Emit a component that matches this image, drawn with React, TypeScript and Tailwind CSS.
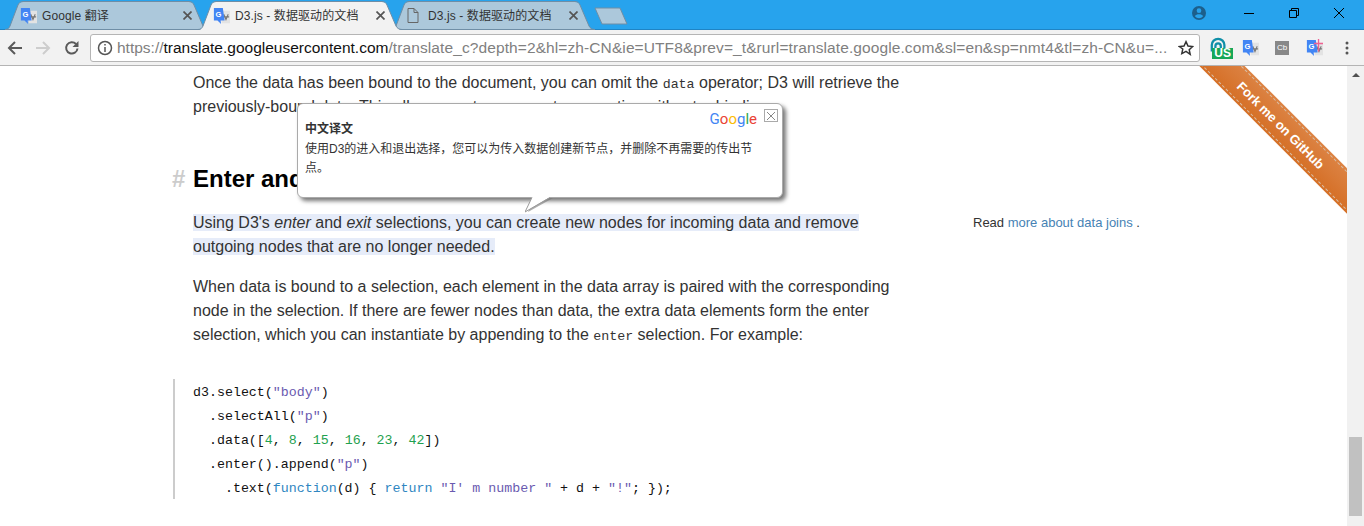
const sans = "font-['Liberation_Sans',Arial,'Noto_Sans_CJK_SC',sans-serif]";
const mono = "font-['Liberation_Mono',monospace] text-[13.300px] leading-none";

function TranslateIcon({ star = false }: { star?: boolean }) {
  return (
    <svg width="17" height="18" viewBox="0 0 19 20">
      <path d="M8 4h11v14H10z" fill="#e3e3e3" />
      <path d="M12 8l2.500 6L17 8M11 11h7" fill="none" stroke="#777" strokeWidth="1.200" />
      <path d="M1 1h10l2 14H8.500l.5 4-4-4H1z" fill="#4285f4" />
      <text x="2.800" y="11" fontSize="8.500" fontWeight="700" fill="#fff" fontFamily="Liberation Sans">G</text>
      {star && <path d="M14 0v14M9 5h10" stroke="#f06292" strokeWidth="1.500" />}
    </svg>
  );
}

function Tab({ title, active, icon, className = "" }: { title: string; active?: boolean; icon: React.ReactNode; className?: string }) {
  return (
    <div className={`relative flex h-[29px] w-[204px] shrink-0 items-center pl-[15px] pr-[17px] ${active ? "z-10" : ""} ${className}`}>
      <svg className="absolute inset-0" width="204" height="29" viewBox="0 0 204 29">
        <path d="M0 29C3 29 4 27 5 25L13 4C14 2 15 1 18 1H184C187 1 188 2 189 4L198 25C199 27 201 29 204 29Z" fill={active ? "#f2f2f2" : "#acc8db"} />
        <path d="M0 28.500C3 28.500 4 27 5 25L13 4C14 2 15 .5 18 .5H184C187 .5 188 2 189 4L198 25C199 27 201 28.500 204 28.500" fill="none" stroke="#6f8ea6" />
        {!active && <path d="M0 28.500H204" stroke="#6f8ea6" />}
      </svg>
      <div className="relative flex w-full items-center">
        <span className="flex w-[22px] shrink-0">{icon}</span>
        <span className={`flex-1 whitespace-nowrap text-[12px] tracking-[0.1px] text-[#333] ${sans}`}>{title}</span>
        <svg width="9" height="9" viewBox="0 0 9 9" stroke="#555" strokeWidth="1.700"><path d="M.5.5l8 8M8.500.5l-8 8" /></svg>
      </div>
    </div>
  );
}

function Chrome() {
  return (
    <div className={sans}>
      <div className="flex h-[30px] items-end justify-between border-b border-[#1f84c5] bg-[#27a3ed] pl-[5px]">
        <div className="-mb-[1px] flex items-end">
          <Tab title="Google 翻译" icon={<TranslateIcon />} />
          <Tab className="-ml-[11px]" title="D3.js - 数据驱动的文档" active icon={<TranslateIcon />} />
          <Tab className="-ml-[11px]" title="D3.js - 数据驱动的文档" icon={
            <svg width="14" height="17" viewBox="0 0 14 17" fill="none" stroke="#666"><path d="M2 1.500h6l4 4v10H2zM8 1.500v4h4" /></svg>
          } />
          <svg className="-ml-[1px] mb-[5px]" width="34" height="18" viewBox="0 0 34 18"><path d="M1 1h25l7 16H8z" fill="#acc8db" stroke="#6f8ea6" /></svg>
        </div>
        <div className="mr-[2px] flex h-full items-start">
          <svg className="mr-[20px] mt-[6px]" width="14" height="14" viewBox="0 0 24 24" fill="#1c5f8c"><path d="M12 0a12 12 0 100 24 12 12 0 000-24zm0 4a4 4 0 110 8 4 4 0 010-8zm0 17a9 9 0 01-7-3.500c1-2.500 4-3.500 7-3.500s6 1 7 3.500A9 9 0 0112 21z" /></svg>
          <div className="flex w-[45px] justify-center pt-[13px]"><div className="h-[1px] w-[10px] bg-black" /></div>
          <div className="flex w-[45px] justify-center pt-[8px]">
            <svg width="10" height="10" viewBox="0 0 10 10" fill="none" stroke="#000"><path d="M.5 2.500h7v7h-7zM2.500 2.500v-2h7v7h-2" /></svg>
          </div>
          <div className="flex w-[46px] justify-center pt-[8px]">
            <svg width="10" height="10" viewBox="0 0 10 10" stroke="#000"><path d="M0 0l10 10M10 0L0 10" /></svg>
          </div>
        </div>
      </div>
      <div className="flex h-[36px] items-center border-b border-[#b4b4b4] bg-[#f2f2f2]">
        <div className="flex w-[90px] items-center pl-[7px]">
          <svg width="16" height="16" viewBox="0 0 16 16" fill="none" stroke="#5a5a5a" strokeWidth="2"><path d="M15 8H2M8 2L2 8l6 6" /></svg>
          <svg className="ml-[12px]" width="16" height="16" viewBox="0 0 16 16" fill="none" stroke="#cdcdcd" strokeWidth="2"><path d="M1 8h13M8 2l6 6-6 6" /></svg>
          <svg className="ml-[13px]" width="16" height="16" viewBox="0 0 16 16" fill="none" stroke="#5a5a5a" strokeWidth="2"><path d="M13.500 8.500A5.700 5.700 0 1112 4" /><path d="M14.500 1v6h-6z" fill="#5a5a5a" stroke="none" /></svg>
        </div>
        <div className="flex h-[28px] w-[1110px] items-center rounded-[3px] border border-[#b5b5b5] bg-white pl-[6px] pr-[5px]">
          <svg className="shrink-0" width="16" height="16" viewBox="0 0 16 16" fill="none" stroke="#555" strokeWidth="1.500"><circle cx="8" cy="8" r="6.500" /><path d="M8 7v5M8 4v1.500" /></svg>
          <div className="ml-[4px] flex-1 overflow-hidden whitespace-nowrap text-[15.500px] text-[#808080]">https://<span className="text-[#111]">translate.googleusercontent.com</span><span className="tracking-[0.1px]">/translate_c?depth=2&amp;hl=zh-CN&amp;ie=UTF8&amp;prev=_t&amp;rurl=translate.google.com&amp;sl=en&amp;sp=nmt4&amp;tl=zh-CN&amp;u=...</span></div>
          <svg className="shrink-0" width="16" height="16" viewBox="0 0 24 24" fill="none" stroke="#333" strokeWidth="2.200"><path d="M12 2.500l3 6.500 7 .8-5.200 4.700 1.500 7L12 17l-6.300 3.500 1.500-7L2 9.800 9 9z" /></svg>
        </div>
        <div className="flex flex-1 items-center pl-[10px]">
          <div className="relative h-[22px] w-[23px]">
            <svg width="18" height="18" viewBox="0 0 20 20" fill="none" stroke="#0f8fa8" strokeWidth="2.500"><path d="M2 16V9a7 7 0 0114 0v6" /><path d="M6 16v-6a3 3 0 016 0v3" /></svg>
            <span className="absolute bottom-0 right-0 bg-[#16a757] px-[2px] text-[12px] font-bold leading-[11px] text-white">US</span>
          </div>
          <span className="ml-[9px] flex w-[17px]"><TranslateIcon /></span>
          <span className="ml-[16px] flex h-[14px] w-[14px] items-center justify-center bg-[#888] text-[8px] text-white">Cb</span>
          <span className="ml-[17px] flex w-[17px]"><TranslateIcon star /></span>
          <svg className="ml-[22px]" width="4" height="14" viewBox="0 0 4 14" fill="#555"><circle cx="2" cy="2" r="1.500" /><circle cx="2" cy="7" r="1.500" /><circle cx="2" cy="12" r="1.500" /></svg>
        </div>
      </div>
    </div>
  );
}

function Bubble() {
  return (
    <div className="absolute left-[297px] top-[37px] z-20 h-[95px] w-[486px] rounded-[6px] border border-[#aaa] bg-white px-[7px] pt-[15px] shadow-[3px_3px_4px_#777]">
      <div className="absolute right-[25px] top-[6px] font-[Roboto,sans-serif] text-[15px] leading-[18px]">
        <span className="text-[#4285f4]">G</span><span className="text-[#ea4335]">o</span><span className="text-[#fbbc05]">o</span><span className="text-[#4285f4]">g</span><span className="text-[#34a853]">l</span><span className="text-[#ea4335]">e</span>
      </div>
      <div className="absolute right-[4px] top-[5px] flex h-[13px] w-[14px] items-center justify-center border border-[#aaa]">
        <svg width="10" height="10" viewBox="0 0 10 10" stroke="#888"><path d="M1 1l8 8M9 1L1 9" /></svg>
      </div>
      <div className={`text-[12px] font-bold leading-[20px] text-[#333] ${sans}`}>中文译文</div>
      <p className={`mt-[1px] w-[455px] text-[12px] leading-[19px] text-[#333] ${sans}`}>使用D3的进入和退出选择，您可以为传入数据创建新节点，并删除不再需要的传出节点。</p>
      <svg className="absolute left-[227px] top-[93px]" width="30" height="18" viewBox="0 0 30 18">
        <path d="M9 1L3 15 28 1z" fill="#777" opacity=".6" />
        <path d="M7 0L0 15 25 0z" fill="#fff" />
        <path d="M7 0.500L0 15 25 0.500" fill="none" stroke="#999" />
      </svg>
    </div>
  );
}

function Ribbon() {
  return (
    <div className="absolute right-0 top-0 h-[150px] w-[150px] overflow-hidden">
      <div className="absolute left-[-46px] top-[43px] h-[32px] w-[260px] rotate-45 bg-gradient-to-b from-[#dc8343] to-[#d56f25] py-[2px]">
        <div className="flex h-full items-center justify-center border-y border-dashed border-[#d8bda6] pt-[1px] text-[13px] font-bold text-white">
          Fork me on GitHub
        </div>
      </div>
    </div>
  );
}

const s = "text-[#6a5ab0]";
const n = "text-[#1fa14f]";
const k = "text-[#2f86c1]";

function Code() {
  return (
    <pre className="ml-[-20px] mt-[32px] h-[120px] border-l-2 border-[#ccc] pl-[18px] pt-[2px] font-['Liberation_Mono',monospace] text-[13.300px] leading-[24px] text-[#111]">
      <div>d3.select(<span className={s}>"body"</span>)</div>
      <div>  .selectAll(<span className={s}>"p"</span>)</div>
      <div>  .data([<span className={n}>4</span>, <span className={n}>8</span>, <span className={n}>15</span>, <span className={n}>16</span>, <span className={n}>23</span>, <span className={n}>42</span>])</div>
      <div>  .enter().append(<span className={s}>"p"</span>)</div>
      <div>    .text(<span className={k}>function</span>(d) {"{"} <span className={k}>return</span> <span className={s}>"I' m number "</span> + d + <span className={s}>"!"</span>; {"}"});</div>
    </pre>
  );
}

export default function App() {
  return (
    <div className={`h-[526px] w-[1364px] overflow-hidden bg-white ${sans}`}>
      <Chrome />
      <div className="relative flex h-[460px] overflow-hidden">
        <div className="relative flex-1 overflow-hidden">
          <Bubble />
          <Ribbon />
          <main className="w-[910px] pl-[193px] pt-[5px] text-[16px] leading-[24px] text-[#333]">
            <p className="w-[717px]">Once the data has been bound to the document, you can omit the <code className={mono}>data</code> operator; D3 will retrieve the previously-bound data. This allows you to recompute properties without rebinding.</p>
            <h2 className="relative mt-[42px] text-[24px] font-bold leading-[36px] text-black">
              <span className="absolute left-[-21px] text-[#ccc]">#</span>
              Enter and Exit
            </h2>
            <div className="mt-[14px] flex w-[1000px]">
              <p className="w-[717px] shrink-0"><span className="bg-[#e6ecf9]">Using D3's <em>enter</em> and <em>exit</em> selections, you can create new nodes for incoming data and remove outgoing nodes that are no longer needed.</span></p>
              <p className="ml-[63px] whitespace-nowrap text-[13px] text-[#333]">Read <a className="text-[#4682b4]">more about data joins</a> .</p>
            </div>
            <p className="mt-[16px] w-[717px]">When data is bound to a selection, each element in the data array is paired with the corresponding node in the selection. If there are fewer nodes than data, the extra data elements form the enter selection, which you can instantiate by appending to the <code className={mono}>enter</code> selection. For example:</p>
            <Code />
          </main>
        </div>
        <div className="flex w-[17px] shrink-0 flex-col bg-[#f1f1f1]">
          <div className="flex h-[17px] items-center justify-center">
            <div className="h-0 w-0 border-x-[4px] border-b-[4px] border-x-transparent border-b-[#505050]" />
          </div>
          <div className="flex-1" />
          <div className="mx-[2px] mb-[10px] h-[79px] bg-[#c1c1c1]" />
        </div>
      </div>
    </div>
  );
}
